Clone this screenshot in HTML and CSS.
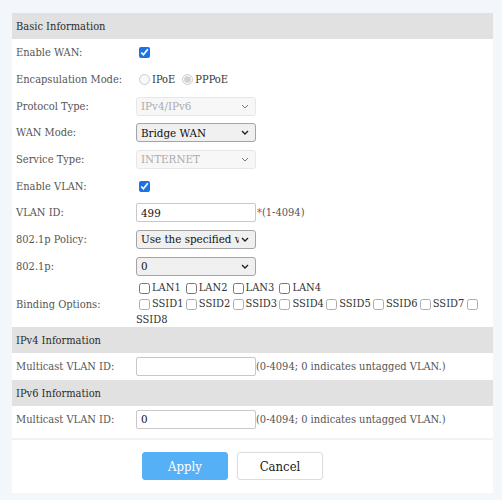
FILE: index.html
```html
<!DOCTYPE html>
<html lang="en">
<head>
    <meta charset="UTF-8">
    <title>WAN Configuration</title>
    <link rel="stylesheet" href="styles.css">
</head>
<body>
    <div class="panel">
        <div class="section-title">Basic Information</div>
        <div class="row">
            <label class="label">Enable WAN:</label>
            <div class="field"><input type="checkbox" class="check" checked></div>
        </div>
        <div class="row">
            <label class="label">Encapsulation Mode:</label>
            <div class="field">
                <label class="radio"><input type="radio" name="encap" disabled>IPoE</label>
                <label class="radio"><input type="radio" name="encap" checked disabled>PPPoE</label>
            </div>
        </div>
        <div class="row">
            <label class="label">Protocol Type:</label>
            <div class="field">
                <span class="select-wrap"><select class="select" disabled><option>IPv4/IPv6</option></select><svg class="chevron off" viewBox="0 0 8 5"><polyline points="1,1 4,4 7,1"/></svg></span>
            </div>
        </div>
        <div class="row">
            <label class="label">WAN Mode:</label>
            <div class="field">
                <span class="select-wrap"><select class="select"><option>Bridge WAN</option></select><svg class="chevron" viewBox="0 0 8 5"><polyline points="1,1 4,4 7,1"/></svg></span>
            </div>
        </div>
        <div class="row">
            <label class="label">Service Type:</label>
            <div class="field">
                <span class="select-wrap"><select class="select" disabled><option>INTERNET</option></select><svg class="chevron off" viewBox="0 0 8 5"><polyline points="1,1 4,4 7,1"/></svg></span>
            </div>
        </div>
        <div class="row">
            <label class="label">Enable VLAN:</label>
            <div class="field"><input type="checkbox" class="check" checked></div>
        </div>
        <div class="row">
            <label class="label">VLAN ID:</label>
            <div class="field"><input type="text" class="text-input" value="499"><span class="required">*</span><span class="hint">(1-4094)</span></div>
        </div>
        <div class="row">
            <label class="label">802.1p Policy:</label>
            <div class="field">
                <span class="select-wrap"><select class="select"><option>Use the specified value</option></select><svg class="chevron" viewBox="0 0 8 5"><polyline points="1,1 4,4 7,1"/></svg></span>
            </div>
        </div>
        <div class="row">
            <label class="label">802.1p:</label>
            <div class="field">
                <span class="select-wrap"><select class="select"><option>0</option></select><svg class="chevron" viewBox="0 0 8 5"><polyline points="1,1 4,4 7,1"/></svg></span>
            </div>
        </div>
        <div class="row row-tall">
            <label class="label">Binding Options:</label>
            <div class="field binding">
                <div class="bind-line">
                    <label class="bind"><input type="checkbox" class="box">LAN1</label>
                    <label class="bind"><input type="checkbox" class="box">LAN2</label>
                    <label class="bind"><input type="checkbox" class="box">LAN3</label>
                    <label class="bind"><input type="checkbox" class="box">LAN4</label>
                </div>
                <div class="bind-line">
                    <label class="bind"><input type="checkbox" class="box box-off">SSID1</label>
                    <label class="bind"><input type="checkbox" class="box box-off">SSID2</label>
                    <label class="bind"><input type="checkbox" class="box box-off">SSID3</label>
                    <label class="bind"><input type="checkbox" class="box box-off">SSID4</label>
                    <label class="bind"><input type="checkbox" class="box box-off">SSID5</label>
                    <label class="bind"><input type="checkbox" class="box box-off">SSID6</label>
                    <label class="bind"><input type="checkbox" class="box box-off">SSID7</label>
                    <label class="bind"><input type="checkbox" class="box box-off"></label>
                </div>
                <div class="bind-wrap">SSID8</div>
            </div>
        </div>

        <div class="section-title">IPv4 Information</div>
        <div class="row">
            <label class="label">Multicast VLAN ID:</label>
            <div class="field"><input type="text" class="text-input" value=""><span class="hint">(0-4094; 0 indicates untagged VLAN.)</span></div>
        </div>

        <div class="section-title">IPv6 Information</div>
        <div class="row">
            <label class="label">Multicast VLAN ID:</label>
            <div class="field"><input type="text" class="text-input" value="0"><span class="hint">(0-4094; 0 indicates untagged VLAN.)</span></div>
        </div>

        <div class="actions">
            <button class="btn btn-apply">Apply</button>
            <button class="btn btn-cancel">Cancel</button>
        </div>
    </div>
</body>
</html>
```

FILE: styles.css
```css
body {
    margin: 0;
    padding: 13px 9px 7px 12px;
    background-color: #f3f6fb;
    font-family: 'DejaVu Serif', serif;
    font-stretch: condensed;
    font-size: 11px;
    color: #555;
}
.panel {
    background: #ffffff;
    width: 481px;
    padding-bottom: 13px;
}
.section-title {
    background-color: #e1e1e1;
    color: #2b2b2b;
    height: 26px;
    line-height: 27px;
    padding-left: 4px;
}
.row {
    display: flex;
    align-items: center;
    height: 25.67px;
    padding: 1px 0 0 4px;
}
.row-tall {
    height: 47px;
    padding-top: 2px;
    margin-bottom: -1px;
}
.label {
    width: 120px;
    flex-shrink: 0;
}
.field {
    display: flex;
    align-items: center;
    flex: 1;
}
.check {
    width: 11px;
    height: 11px;
    margin: 0 0 0 3px;
    accent-color: #1a73e8;
}
.radio {
    display: flex;
    align-items: center;
    margin-right: 4px;
    color: #333;
}
.radio input {
    width: 11px;
    height: 11px;
    margin: 0 2px 0 3px;
}
.select-wrap {
    position: relative;
    display: inline-block;
    height: 19px;
}
.select {
    appearance: none;
    width: 120px;
    height: 19px;
    font-family: inherit;
    font-stretch: inherit;
    font-size: 11.5px;
    color: #111;
    background-color: #f0f0f0;
    border: 1px solid #a4a4a4;
    border-radius: 3px;
    padding: 0 16px 0 4px;
    margin: 0;
}
.select:disabled {
    color: #888;
    background-color: #f5f5f5;
    border-color: #dedede;
}
.chevron {
    position: absolute;
    right: 7px;
    top: 7px;
    width: 8px;
    height: 5px;
    fill: none;
    stroke: #222;
    stroke-width: 1.4;
}
.chevron.off {
    stroke: #777;
    stroke-width: 1;
}
.text-input {
    width: 120px;
    height: 19px;
    box-sizing: border-box;
    font-family: inherit;
    font-stretch: inherit;
    font-size: 11.5px;
    color: #111;
    border: 1px solid #c8c8c8;
    border-radius: 2px;
    padding: 0 4px;
    margin: 0;
}
.required {
    color: #e53935;
    margin-left: 1px;
}
.hint {
    color: #555;
}
.binding {
    display: block;
    color: #333;
    line-height: 16px;
    white-space: nowrap;
}
.bind-line {
    display: grid;
    grid-template-columns: repeat(8, 46.8px);
    align-items: center;
}
.bind {
    display: flex;
    align-items: center;
}
.box {
    width: 11px;
    height: 11px;
    margin: 0 2px 0 3px;
}
.box-off {
    opacity: 0.6;
}
.actions {
    display: flex;
    justify-content: center;
    gap: 9px;
    border-top: 2px solid #f2f2f2;
    margin-top: 6px;
    padding: 12px 40px 0 0;
}
.btn {
    width: 86px;
    height: 28px;
    font-family: inherit;
    font-stretch: inherit;
    font-size: 13px;
    border-radius: 3px;
}
.btn-apply {
    background-color: #56b0f6;
    border: 1px solid #56b0f6;
    color: #ffffff;
}
.btn-cancel {
    background-color: #ffffff;
    border: 1px solid #dcdcdc;
    color: #222;
}
```
